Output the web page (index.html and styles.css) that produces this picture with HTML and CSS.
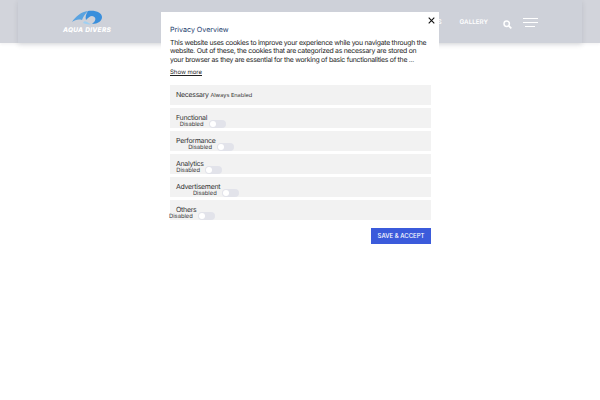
FILE: index.html
```html
<!DOCTYPE html>
<html lang="en">
<head>
  <meta charset="UTF-8" />
  <meta name="viewport" content="width=device-width, initial-scale=1" />
  <title>Aqua Divers</title>
  <link rel="stylesheet" href="styles.css">
</head>
<body>
  <header class="site-bar">
    <div class="site-inner">
      <a class="logo" href="#">
        <svg class="logo-mark" width="34" height="15" viewBox="0 0 34 15">
          <path d="M2 12 C6 6 11 2 18 1 C15 4 13 7 12 10 C8 9 5 10 2 12 Z" fill="#5aa3e0" />
          <path d="M18 1 C26 0 32 3 32 7 C32 11 28 14 22 14 C26 11 27 7 22 6 C20 6 18 8 16 10 C15 7 16 4 18 1 Z" fill="#3a8fdc" />
          <path d="M13 13 C14 11 15 11 17 12 C19 13 20 14 22 14 C19 15 16 14 13 13 Z" fill="#9fd0f2" />
        </svg>
        <span class="logo-text">AQUA DIVERS</span>
      </a>
      <nav class="site-nav">
        <a href="#">S</a>
        <a href="#">GALLERY</a>
      </nav>
      <svg class="search-icon" width="9" height="9" viewBox="0 0 9 9">
        <circle cx="3.7" cy="3.7" r="2.7" fill="none" stroke="#fff" stroke-width="1.5" />
        <path d="M5.8 5.8 L8.3 8.3" stroke="#fff" stroke-width="1.7" />
      </svg>
      <div class="burger"><span></span><span></span><span></span></div>
    </div>
  </header>

  <div class="modal">
    <button class="close" aria-label="Close">
      <svg width="7" height="7" viewBox="0 0 7 7"><path d="M.7 .7 L6.3 6.3 M6.3 .7 L.7 6.3" stroke="#111" stroke-width="1.1" /></svg>
    </button>
    <h2>Privacy Overview</h2>
    <p class="intro">This website uses cookies to improve your experience while you navigate through the website. Out of these, the cookies that are categorized as necessary are stored on your browser as they are essential for the working of basic functionalities of the ...</p>
    <a class="show-more" href="#">Show more</a>

    <div class="rows">
      <div class="row">
        <span class="row-name">Necessary</span>
        <span class="row-note">Always Enabled</span>
      </div>
      <div class="row">
        <div class="row-head">
          <span class="row-name">Functional</span>
          <div class="state"><span>Disabled</span><i class="toggle"></i></div>
        </div>
      </div>
      <div class="row">
        <div class="row-head">
          <span class="row-name">Performance</span>
          <div class="state"><span>Disabled</span><i class="toggle"></i></div>
        </div>
      </div>
      <div class="row">
        <div class="row-head">
          <span class="row-name">Analytics</span>
          <div class="state"><span>Disabled</span><i class="toggle"></i></div>
        </div>
      </div>
      <div class="row">
        <div class="row-head">
          <span class="row-name">Advertisement</span>
          <div class="state"><span>Disabled</span><i class="toggle"></i></div>
        </div>
      </div>
      <div class="row">
        <div class="row-head">
          <span class="row-name">Others</span>
          <div class="state"><span>Disabled</span><i class="toggle"></i></div>
        </div>
      </div>
    </div>

    <div class="actions">
      <button class="save">SAVE &amp; ACCEPT</button>
    </div>
  </div>
</body>
</html>
```

FILE: styles.css
```css
*, *::before, *::after {
  box-sizing: border-box;
}
html, body {
  height: 100%;
}
body {
  margin: 0;
  background: #fff;
  font-family: Inter, 'Open Sans', sans-serif;
  color: #222;
  overflow: hidden;
  text-rendering: geometricPrecision;
}
a {
  color: inherit;
  text-decoration: none;
}
.site-bar {
  height: 43px;
  background: #d2d4db;
  padding: 0 18px;
  box-shadow: 0 1px 3px rgba(60, 64, 80, 0.08);
}
.site-inner {
  height: 43px;
  display: flex;
  align-items: flex-start;
  padding-left: 44px;
  background: #ced1d9;
  box-shadow: 0 2px 5px rgba(60, 64, 80, 0.14);
}
.logo {
  display: flex;
  flex-direction: column;
  align-items: center;
  width: 50px;
  padding-top: 10px;
}
.logo-mark {
  display: block;
}
.logo-text {
  margin-top: 1px;
  color: #fff;
  font-size: 6.5px;
  font-weight: 800;
  font-style: italic;
  letter-spacing: 0.3px;
  white-space: nowrap;
}
.site-nav {
  display: flex;
  gap: 18px;
  margin-left: auto;
  padding-top: 18px;
  font-size: 6.3px;
  font-weight: 600;
  color: #fff;
}
.search-icon {
  margin: 20px 0 0 15px;
}
.burger {
  display: flex;
  flex-direction: column;
  gap: 3px;
  width: 15px;
  margin: 18px 44px 0 11px;
}
.burger span {
  height: 1px;
  width: 15px;
  background: #fff;
}
.burger span:nth-child(3) {
  width: 10px;
  margin-left: 2px;
}
.modal {
  position: absolute;
  top: 12px;
  left: 161px;
  width: 278px;
  bottom: 0;
  padding: 13px 8px 0 9px;
  background: #fff;
}
.close {
  position: absolute;
  top: 5px;
  right: 4px;
  width: 7px;
  height: 7px;
  padding: 0;
  border: 0;
  background: none;
  display: flex;
}
h2 {
  margin: 0 0 4px;
  font-size: 7.1px;
  line-height: 10px;
  font-weight: 400;
  color: #23406e;
}
.intro {
  margin: 0;
  font-size: 6.9px;
  line-height: 8.3px;
  letter-spacing: -0.27px;
  color: #222;
}
.show-more {
  display: block;
  width: fit-content;
  margin-top: 4px;
  font-size: 6px;
  line-height: 9px;
  text-decoration: underline;
}
.rows {
  display: flex;
  flex-direction: column;
  gap: 3px;
  margin-top: 8px;
}
.row {
  height: 20px;
  padding: 7.5px 6px 0;
  background: #f2f2f2;
  font-size: 7px;
  line-height: 6px;
  letter-spacing: -0.3px;
  color: #333;
}
.row-note {
  font-size: 5.6px;
  letter-spacing: 0;
}
.row-head {
  display: inline-flex;
  flex-direction: column;
  align-items: flex-end;
}
.row-name {
  white-space: nowrap;
}
/* narrow box so the disabled label and switch hang off the name's right edge */
.state {
  display: flex;
  justify-content: center;
  align-items: flex-end;
  gap: 5px;
  width: 9px;
  margin-top: -1.5px;
  font-size: 5.8px;
  line-height: 5px;
  letter-spacing: 0;
  white-space: nowrap;
}
.toggle {
  flex: none;
  display: block;
  width: 17px;
  height: 8px;
  margin-bottom: -0.5px;
  border-radius: 4px;
  background: #e2e3ea;
  position: relative;
}
.toggle::before {
  content: '';
  position: absolute;
  left: 1px;
  top: 1px;
  width: 6px;
  height: 6px;
  border-radius: 50%;
  background: #fff;
}
.actions {
  display: flex;
  justify-content: flex-end;
  margin-top: 8px;
}
.save {
  width: 60px;
  height: 16px;
  padding: 0;
  border: 0;
  background: #3b5bdb;
  color: #fff;
  font-family: inherit;
  font-size: 6px;
  font-weight: 500;
}
```
